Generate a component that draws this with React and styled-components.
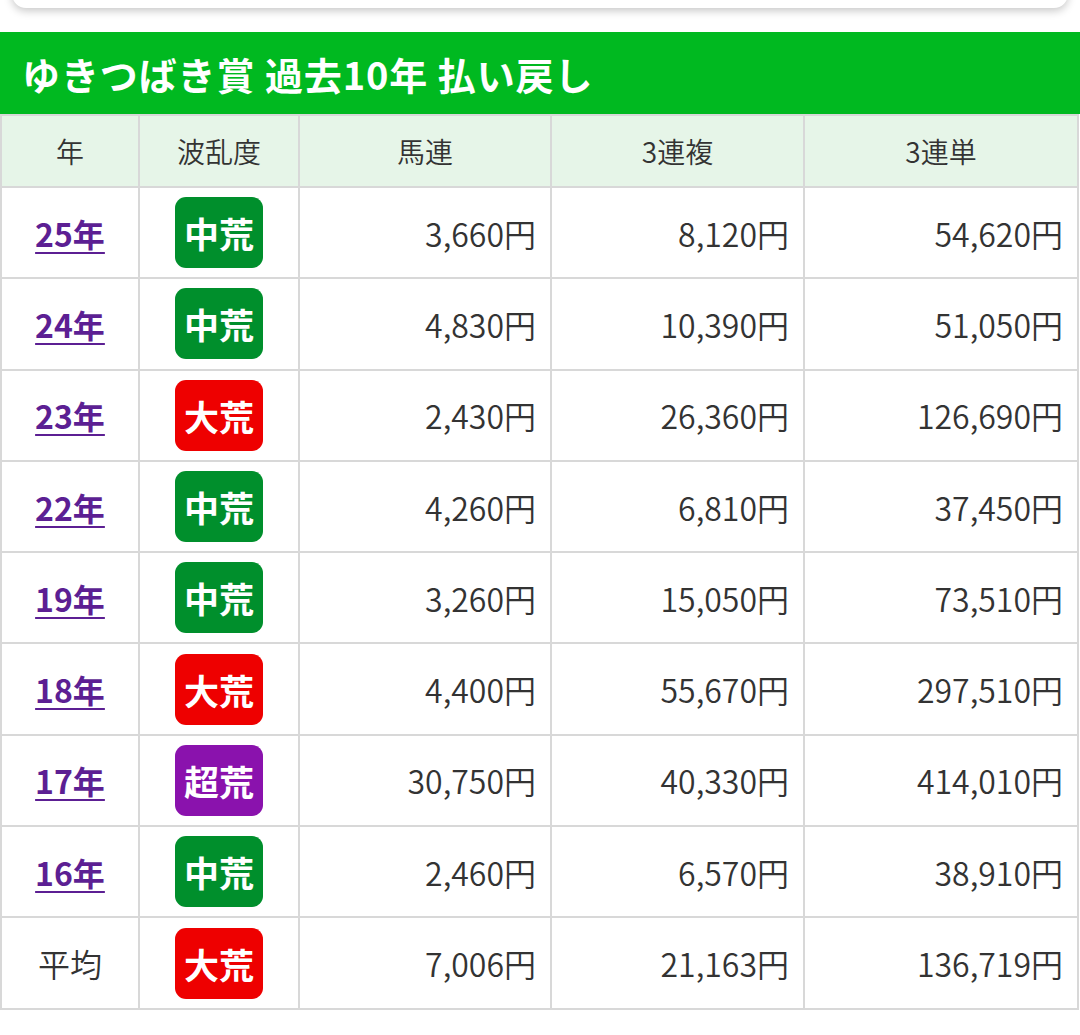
import React from 'react'
import styled, { createGlobalStyle } from 'styled-components';

const GlobalStyle = createGlobalStyle`
    body {
        margin: 0;
        background: #fff;
        font-family: "Noto Sans CJK JP", "Noto Sans", sans-serif;
    }
`;

const Page = styled.div`
    width: 1080px;
    overflow: hidden;
`;

const PrevCard = styled.div`
    height: 48px;
    margin: -40px 12px 0;
    background: #fff;
    border-radius: 0 0 14px 14px;
    box-shadow: 0 3px 8px rgba(0, 0, 0, 0.22);
`;

const Title = styled.h2`
    margin: 24px 0 0;
    height: 82px;
    display: flex;
    align-items: center;
    padding-left: 22px;
    background: #00b920;
    color: #fff;
    font-size: 38px;
    font-weight: 700;
    letter-spacing: 0.9px;
`;

const Table = styled.table`
    width: 1079px;
    border-collapse: collapse;
    table-layout: fixed;
`;

const Th = styled.th`
    width: ${p => (p.w ? `${p.w}px` : 'auto')};
    height: 70px;
    padding: 0;
    border: 2px solid #d8d8d8;
    background: #e6f5e8;
    color: #333;
    font-size: 28px;
    font-weight: 350;
    text-align: center;
`;

const Td = styled.td`
    height: 89.3px;
    padding: 0 ${p => (p.num ? 14 : 0)}px 0 0;
    border: 2px solid #d8d8d8;
    color: #333;
    font-size: 32px;
    font-weight: 350;
    text-align: ${p => (p.num ? 'right' : 'center')};
    vertical-align: middle;
`;

const YearLink = styled.a`
    color: #5c1f93;
    font-weight: 700;
    text-decoration: underline;
    text-underline-offset: 5px;
    text-decoration-thickness: 2px;
`;

const badgeColors = {
    '中荒': '#008f2c',
    '大荒': '#ee0000',
    '超荒': '#8a12ad',
};

const Badge = styled.span`
    display: inline-flex;
    align-items: center;
    justify-content: center;
    width: 88px;
    height: 71px;
    border-radius: 11px;
    background: ${p => badgeColors[p.kind]};
    color: #fff;
    font-size: 35px;
    font-weight: 700;
    vertical-align: middle;
`;

const rows = [
    ['25年', '中荒', '3,660円', '8,120円', '54,620円'],
    ['24年', '中荒', '4,830円', '10,390円', '51,050円'],
    ['23年', '大荒', '2,430円', '26,360円', '126,690円'],
    ['22年', '中荒', '4,260円', '6,810円', '37,450円'],
    ['19年', '中荒', '3,260円', '15,050円', '73,510円'],
    ['18年', '大荒', '4,400円', '55,670円', '297,510円'],
    ['17年', '超荒', '30,750円', '40,330円', '414,010円'],
    ['16年', '中荒', '2,460円', '6,570円', '38,910円'],
];

const App = () => {
    return (
        <Page>
            <GlobalStyle />
            <PrevCard />
            <Title>ゆきつばき賞 過去10年 払い戻し</Title>
            <Table>
                <thead>
                    <tr>
                        <Th w={136}>年</Th>
                        <Th w={158}>波乱度</Th>
                        <Th w={250}>馬連</Th>
                        <Th w={251}>3連複</Th>
                        <Th>3連単</Th>
                    </tr>
                </thead>
                <tbody>
                    {rows.map((r, i) => (
                        <tr key={i}>
                            <Td><YearLink href='#'>{r[0]}</YearLink></Td>
                            <Td><Badge kind={r[1]}>{r[1]}</Badge></Td>
                            <Td num>{r[2]}</Td>
                            <Td num>{r[3]}</Td>
                            <Td num>{r[4]}</Td>
                        </tr>
                    ))}
                    <tr>
                        <Td>平均</Td>
                        <Td><Badge kind='大荒'>大荒</Badge></Td>
                        <Td num>7,006円</Td>
                        <Td num>21,163円</Td>
                        <Td num>136,719円</Td>
                    </tr>
                </tbody>
            </Table>
        </Page>
    )
}

export default App;
